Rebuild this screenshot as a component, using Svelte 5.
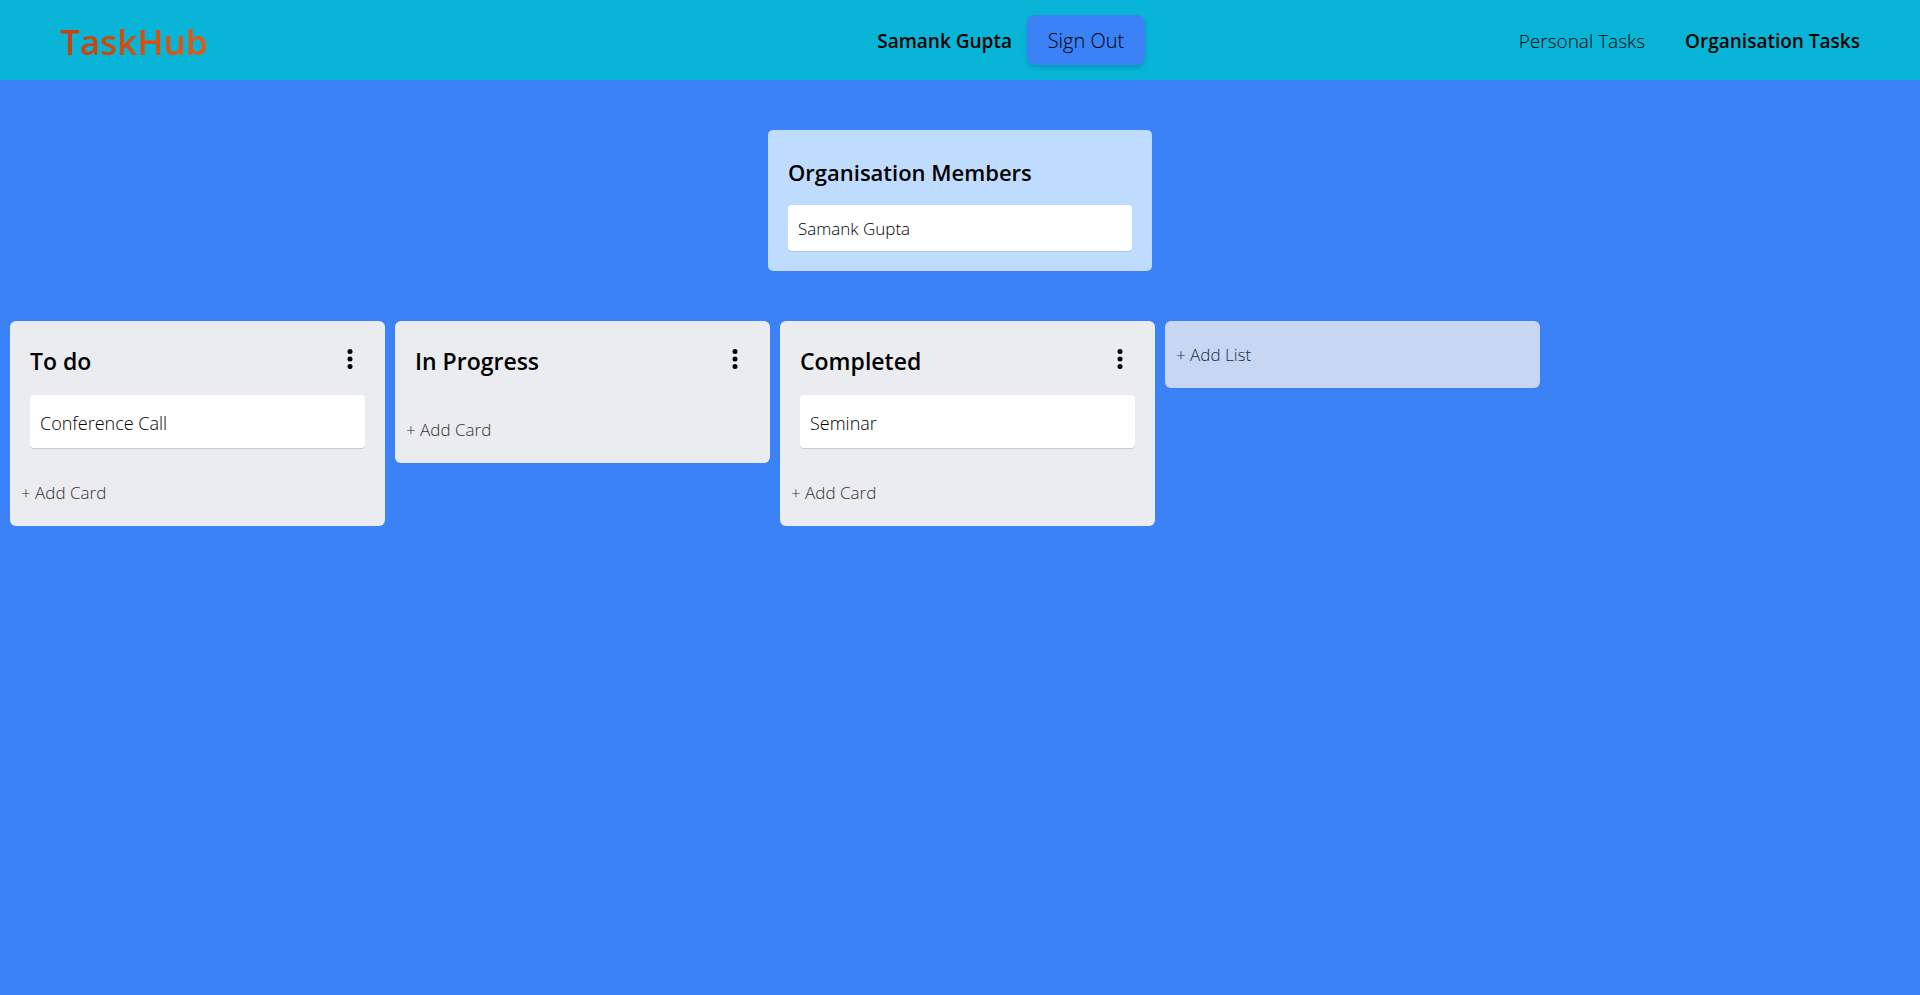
<script>
  const user = 'Samank Gupta';
  const members = ['Samank Gupta'];
  const lists = [
    { title: 'To do', cards: ['Conference Call'] },
    { title: 'In Progress', cards: [] },
    { title: 'Completed', cards: ['Seminar'] }
  ];
</script>

<header class="topbar">
  <a class="brand" href="#home">TaskHub</a>
  <div class="account">
    <span class="user">{user}</span>
    <button class="signout" type="button">Sign Out</button>
  </div>
  <nav class="nav">
    <a href="#personal">Personal Tasks</a>
    <a class="current" href="#organisation" aria-current="page">Organisation Tasks</a>
  </nav>
</header>

<main>
  <section class="members">
    <h2>Organisation Members</h2>
    <ul>
      {#each members as member}
        <li>{member}</li>
      {/each}
    </ul>
  </section>

  <div class="board">
    {#each lists as list}
      <section class="list">
        <div class="list-head">
          <h2>{list.title}</h2>
          <button class="menu" type="button" aria-label="List options">
            <svg viewBox="0 0 30 30" width="30" height="30" aria-hidden="true">
              <circle cx="15" cy="7.5" r="2.5" />
              <circle cx="15" cy="15" r="2.5" />
              <circle cx="15" cy="22.5" r="2.5" />
            </svg>
          </button>
        </div>
        <div class="cards">
          {#each list.cards as card}
            <article class="card">{card}</article>
          {/each}
        </div>
        <button class="add" type="button">+ Add Card</button>
      </section>
    {/each}
    <button class="add-list" type="button">+ Add List</button>
  </div>
</main>

<style>
  :global(body) {
    margin: 0;
    min-height: 100vh;
    background: #3b82f6;
    color: #000;
    font-family: 'Segoe UI', 'Open Sans', sans-serif;
    font-size: 17px;
    font-weight: 300;
    line-height: 26px;
  }

  .topbar,
  .topbar *,
  main,
  main * {
    box-sizing: border-box;
  }

  h2,
  ul {
    margin: 0;
    padding: 0;
    list-style: none;
  }

  a {
    color: inherit;
    text-decoration: none;
  }

  button {
    border: 0;
    color: inherit;
    font: inherit;
    cursor: pointer;
  }

  .topbar {
    display: grid;
    grid-template-columns: 8fr auto 7fr;
    align-items: center;
    min-height: 80px;
    padding: 0 60px;
    background: #08b5d7;
    font-size: 19px;
  }

  .brand {
    justify-self: start;
    padding-top: 4px;
    background: linear-gradient(to right, #c2410c, #ea580c);
    background-clip: text;
    -webkit-background-clip: text;
    color: transparent;
    font-size: 35px;
    font-weight: 600;
    line-height: 48px;
  }

  .account {
    display: flex;
    align-items: center;
    gap: 15px;
  }

  .user,
  .nav {
    padding-top: 2px;
  }

  .user,
  .current {
    font-weight: 600;
  }

  .signout {
    min-width: 118px;
    padding: 13px 20px 11px;
    border-radius: 8px;
    background: #3b82f6;
    box-shadow: 0 4px 6px -1px rgb(0 0 0 / 0.1), 0 2px 4px -1px rgb(0 0 0 / 0.1);
    font-size: 20px;
  }

  .nav {
    display: flex;
    justify-content: flex-end;
    gap: 40px;
  }

  .members {
    width: 20%;
    min-width: 300px;
    margin: 50px auto;
    padding: 25px 20px 20px;
    border-radius: 5px;
    background: #bfdbfe;
  }

  .members h2 {
    margin-bottom: 15px;
    font-size: 22px;
    font-weight: 600;
    line-height: 35px;
  }

  .members li {
    padding: 11px 10px 9px;
    border-radius: 4px;
    background: #fff;
    box-shadow: 0 1px 0 rgb(9 30 66 / 0.1);
  }

  .board {
    display: flex;
    align-items: flex-start;
    gap: 10px;
    padding: 0 10px;
  }

  .list,
  .add-list {
    flex: 0 1 375px;
    border-radius: 6px;
  }

  .list {
    padding-bottom: 20px;
    background: #ebecf0;
  }

  .list-head {
    display: flex;
    align-items: flex-start;
    justify-content: space-between;
    padding: 20px 20px 0;
  }

  .list-head h2 {
    font-size: 23px;
    font-weight: 600;
    line-height: 40px;
  }

  .menu {
    display: flex;
    padding: 3px 0 0;
    background: none;
  }

  .cards {
    display: grid;
    gap: 10px;
    padding: 14px 20px 20px;
  }

  .card {
    margin-bottom: 10px;
    padding: 15px 10px 12px;
    border-radius: 4px;
    background: #fff;
    box-shadow: 0 1px 0 #ccc;
    font-size: 18px;
  }

  .add {
    display: block;
    width: 100%;
    padding: 2px 11px 0;
    background: none;
    color: #333;
    text-align: left;
  }

  .add-list {
    padding: 21px 11px 20px;
    background: rgb(235 236 240 / 0.8);
    color: #172b4d;
    text-align: left;
  }
</style>
